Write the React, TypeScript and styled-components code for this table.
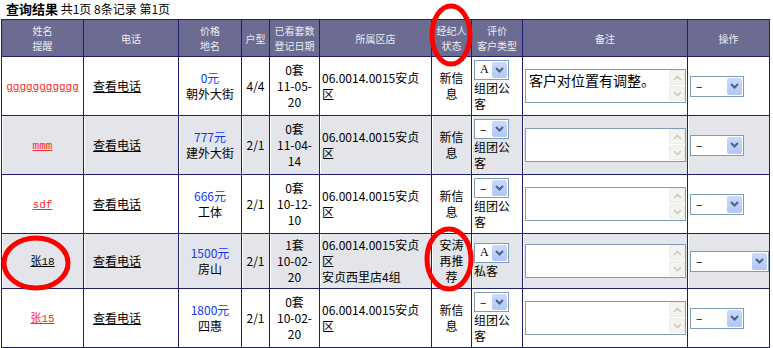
import React from 'react';
import styled, { createGlobalStyle } from 'styled-components';

const GlobalStyle = createGlobalStyle`
  body {
    margin: 0;
    background: #fff;
    font-family: "Noto Sans CJK SC", "Liberation Sans", sans-serif;
    font-size: 12px;
    color: #000;
  }
`;

const Page = styled.div`
  position: relative;
  padding-left: 1px;
  width: 772px;
`;

const Title = styled.div`
  height: 19px;
  line-height: 17px;
  padding-left: 5px;
  font-size: 12px;
  white-space: pre;
`;

const TitleStrong = styled.b`
  font-size: 13px;
  font-weight: bold;
`;

const Grid = styled.table`
  border-collapse: collapse;
  table-layout: fixed;
  width: 769px;
`;

const Col = styled.col<{ $w: number }>`
  width: ${(p) => p.$w}px;
`;

const Th = styled.th`
  background: #6c6c93;
  color: #ececf2;
  border: 1px solid #1f1f6f;
  font-weight: normal;
  font-size: 10px;
  line-height: 15px;
  padding: 3px 1px;
  text-align: center;
  vertical-align: middle;
`;

const Row = styled.tr<{ $shade: boolean }>`
  background: ${(p) => (p.$shade ? '#e4e5ea' : '#fff')};

  & > td {
    box-shadow: ${(p) => (p.$shade ? 'inset 1px 0 0 #fff' : 'none')};
  }
`;

const Td = styled.td<{ $align?: 'left' | 'center' }>`
  border: 1px solid #1f1f6f;
  padding: 3px 2px;
  line-height: 16px;
  text-align: ${(p) => p.$align || 'center'};
  vertical-align: middle;
  overflow: hidden;
`;

const NameLink = styled.a<{ $red: boolean }>`
  color: ${(p) => (p.$red ? '#ff2a2a' : '#000')};
  text-decoration: underline;
  font-family: "Liberation Mono", "Noto Sans CJK SC", monospace;
  font-size: 11px;
`;

const PhoneLink = styled.a`
  display: block;
  padding-left: 7px;
  color: #000;
  text-decoration: underline;
`;

const Price = styled.div`
  color: #1238ff;
`;

const Line = styled.div`
  white-space: nowrap;
`;

const SelectBox = styled.div<{ $w: number; $h: number }>`
  display: inline-flex;
  align-items: stretch;
  box-sizing: border-box;
  width: ${(p) => p.$w}px;
  height: ${(p) => p.$h}px;
  border: 1px solid #7f9db9;
  background: #fff;
  vertical-align: middle;
`;

const SelectValue = styled.span<{ $serif?: boolean }>`
  flex: 1;
  padding-left: 5px;
  line-height: ${(p) => (p.$serif ? '16px' : '17px')};
  text-align: left;
  font-family: ${(p) => (p.$serif ? '"Liberation Serif", serif' : 'inherit')};
  font-size: 12px;
`;

const SelectButton = styled.span`
  width: 15px;
  margin: 1px;
  border-radius: 2px;
  background: linear-gradient(#cad9fd, #b2c7f6);
  display: flex;
  align-items: center;
  justify-content: center;
`;

const EvalCell = styled.div`
  text-align: left;
`;

const Memo = styled.div`
  display: flex;
  box-sizing: border-box;
  width: 161px;
  height: 34px;
  border: 1px solid #7f9db9;
  background: #fff;
`;

const MemoText = styled.div`
  flex: 1;
  padding: 1px 3px;
  font-size: 14px;
  line-height: 18px;
  text-align: left;
  white-space: nowrap;
`;

const ScrollBar = styled.div`
  width: 16px;
  display: flex;
  flex-direction: column;
`;

const ScrollBtn = styled.div`
  flex: 1;
  margin: 0 0 1px 0;
  border: 1px solid #eeede5;
  border-radius: 2px;
  background: #f4f3ee;
  display: flex;
  align-items: center;
  justify-content: center;
`;

const Annotations = styled.svg`
  position: absolute;
  left: 0;
  top: 0;
  pointer-events: none;
`;

const Chevron = () => (
  <svg width="9" height="6" viewBox="0 0 9 6">
    <polyline points="1,1 4.5,4.5 8,1" fill="none" stroke="#4d6185" strokeWidth="2" />
  </svg>
);

const Arrow = ({ up }: { up?: boolean }) => (
  <svg width="9" height="6" viewBox="0 0 9 6">
    <polyline
      points={up ? '1,5 4.5,1.5 8,5' : '1,1 4.5,4.5 8,1'}
      fill="none"
      stroke="#cdcabd"
      strokeWidth="1.6"
    />
  </svg>
);

const FakeSelect = ({ value, w, h, serif }: { value: string; w: number; h: number; serif?: boolean }) => (
  <SelectBox $w={w} $h={h}>
    <SelectValue $serif={serif}>{value}</SelectValue>
    <SelectButton>
      <Chevron />
    </SelectButton>
  </SelectBox>
);

type Record = {
  name: string;
  red: boolean;
  price: string;
  area: string;
  type: string;
  seen: string[];
  store: string[];
  status: string[];
  grade: string;
  cust: string[];
  note: string;
  opWidth: number;
};

const storeLines = ['06.0014.0015安贞', '区'];

const records: Record[] = [
  { name: 'ggggggggggg', red: true, price: '0元', area: '朝外大街', type: '4/4', seen: ['0套', '11-05-', '20'], store: storeLines, status: ['新信', '息'], grade: 'A', cust: ['组团公', '客'], note: '客户对位置有调整。', opWidth: 54 },
  { name: 'mmm', red: true, price: '777元', area: '建外大街', type: '2/1', seen: ['0套', '11-04-', '14'], store: storeLines, status: ['新信', '息'], grade: '–', cust: ['组团公', '客'], note: '', opWidth: 54 },
  { name: 'sdf', red: true, price: '666元', area: '工体', type: '2/1', seen: ['0套', '10-12-', '10'], store: storeLines, status: ['新信', '息'], grade: '–', cust: ['组团公', '客'], note: '', opWidth: 54 },
  { name: '张18', red: false, price: '1500元', area: '房山', type: '2/1', seen: ['1套', '10-02-', '20'], store: [...storeLines, '安贞西里店4组'], status: ['安涛', '再推', '荐'], grade: 'A', cust: ['私客'], note: '', opWidth: 79 },
  { name: '张15', red: true, price: '1800元', area: '四惠', type: '2/1', seen: ['0套', '10-02-', '20'], store: storeLines, status: ['新信', '息'], grade: '–', cust: ['组团公', '客'], note: '', opWidth: 54 },
];

const widths = [82, 95, 63, 28, 50, 112, 40, 51, 165, 82];

const headers: string[][] = [
  ['姓名', '提醒'],
  ['电话'],
  ['价格', '地名'],
  ['户型'],
  ['已看套数', '登记日期'],
  ['所属区店'],
  ['经纪人', '状态'],
  ['评价', '客户类型'],
  ['备注'],
  ['操作'],
];

const Lines = ({ items }: { items: string[] }) => (
  <>
    {items.map((t, i) => (
      <Line key={i}>{t}</Line>
    ))}
  </>
);

export default function App() {
  return (
    <Page>
      <GlobalStyle />
      <Title>
        <TitleStrong>查询结果</TitleStrong> 共1页 8条记录 第1页
      </Title>
      <Grid>
        <colgroup>
          {widths.map((w, i) => (
            <Col key={i} $w={w} />
          ))}
        </colgroup>
        <thead>
          <tr>
            {headers.map((h, i) => (
              <Th key={i}>
                <Lines items={h} />
              </Th>
            ))}
          </tr>
        </thead>
        <tbody>
          {records.map((r, i) => (
            <Row key={i} $shade={i % 2 === 1}>
              <Td>
                <NameLink $red={r.red}>{r.name}</NameLink>
              </Td>
              <Td $align="left">
                <PhoneLink>查看电话</PhoneLink>
              </Td>
              <Td>
                <Price>{r.price}</Price>
                <div>{r.area}</div>
              </Td>
              <Td>{r.type}</Td>
              <Td>
                <Lines items={r.seen} />
              </Td>
              <Td $align="left">
                <Lines items={r.store} />
              </Td>
              <Td>
                <Lines items={r.status} />
              </Td>
              <Td $align="left">
                <EvalCell>
                  <FakeSelect value={r.grade} w={35} h={20} serif={r.grade === 'A'} />
                  <Lines items={r.cust} />
                </EvalCell>
              </Td>
              <Td $align="left">
                <Memo>
                  <MemoText>{r.note}</MemoText>
                  <ScrollBar>
                    <ScrollBtn>
                      <Arrow up />
                    </ScrollBtn>
                    <ScrollBtn>
                      <Arrow />
                    </ScrollBtn>
                  </ScrollBar>
                </Memo>
              </Td>
              <Td $align="left">
                <FakeSelect value="–" w={r.opWidth} h={21} />
              </Td>
            </Row>
          ))}
        </tbody>
      </Grid>
      <Annotations width="773" height="348">
        <ellipse cx="451" cy="35" rx="19" ry="29" fill="none" stroke="#f00" strokeWidth="5" />
        <ellipse cx="36" cy="263" rx="32" ry="25" fill="none" stroke="#f00" strokeWidth="5" />
        <ellipse cx="449" cy="259" rx="22" ry="30" fill="none" stroke="#f00" strokeWidth="5" />
      </Annotations>
    </Page>
  );
}
